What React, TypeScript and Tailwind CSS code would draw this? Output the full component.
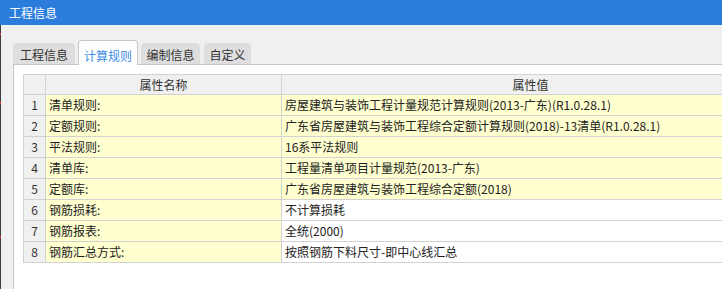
import React from "react";

const rows = [
  { name: "清单规则:", value: "房屋建筑与装饰工程计量规范计算规则(2013-广东)(R1.0.28.1)", hl: true },
  { name: "定额规则:", value: "广东省房屋建筑与装饰工程综合定额计算规则(2018)-13清单(R1.0.28.1)", hl: true },
  { name: "平法规则:", value: "16系平法规则", hl: true },
  { name: "清单库:", value: "工程量清单项目计量规范(2013-广东)", hl: true },
  { name: "定额库:", value: "广东省房屋建筑与装饰工程综合定额(2018)", hl: true },
  { name: "钢筋损耗:", value: "不计算损耗", hl: false },
  { name: "钢筋报表:", value: "全统(2000)", hl: false },
  { name: "钢筋汇总方式:", value: "按照钢筋下料尺寸-即中心线汇总", hl: false },
];

const tabs = [
  { label: "工程信息", w: "w-[62px]" },
  { label: "计算规则", w: "w-[60px]", active: true },
  { label: "编制信息", w: "w-[59px]" },
  { label: "自定义", w: "w-[47px]" },
];

const Tab = ({ label, w, active }: { label: string; w: string; active?: boolean }) =>
  active ? (
    <div
      className={`${w} h-[25px] -mb-px relative z-10 flex items-end justify-center pb-[3px] bg-white border border-b-0 border-[#c6c6c6] rounded-t-[4px] text-[#3a8be6]`}
    >
      {label}
    </div>
  ) : (
    <div className={`${w} h-[21px] flex items-end justify-center pb-[3px] bg-[#dedede] rounded-t-[4px] text-[#333]`}>
      {label}
    </div>
  );

export default function App() {
  return (
    <div className="w-[722px] h-[289px] overflow-hidden bg-[#f0f0f0] text-[12px] leading-none font-['Noto_Sans_CJK_SC','Noto_Sans',sans-serif]">
      <div className="h-[25px] bg-[#2b7ddc] text-white flex items-center pl-[9px]">工程信息</div>

      <div className="relative h-[264px] border-l border-[#3c3c3c] pl-[12px] pt-[15px] flex flex-col">
        <span className="absolute left-[-1px] top-[8px] w-px h-[2px] bg-[#e33]" />
        <span className="absolute left-[-1px] top-[77px] w-px h-[2px] bg-[#e33]" />
        <span className="absolute left-[-1px] top-[211px] w-px h-[2px] bg-[#e33]" />

        <div className="flex items-end h-[24px] gap-[3px]">
          {tabs.map((t, i) => (
            <div key={t.label} className={i === 3 ? "ml-px" : ""}>
              <Tab {...t} />
            </div>
          ))}
        </div>

        <div className="flex-1 bg-white border-t border-l border-[#c6c6c6] pl-[9px] pt-[9px]">
          <div className="w-[760px] border-t border-l border-[#d2d2d2] text-[#222]">
            <div className="flex h-[20px] bg-[#f0f0f0] text-[#333]">
              <div className="w-[22px] border-r border-b border-[#d2d2d2]" />
              <div className="w-[236px] border-r border-b border-[#d2d2d2] flex items-center justify-center">属性名称</div>
              <div className="w-[498px] border-r border-b border-[#d2d2d2] flex items-center justify-center">属性值</div>
            </div>
            {rows.map((r, i) => (
              <div key={r.name} className="flex h-[21px]">
                <div className="w-[22px] bg-[#f0f0f0] border-r border-b border-[#d2d2d2] flex items-center justify-center text-[#333]">
                  {i + 1}
                </div>
                <div className="w-[236px] bg-[#ffffd0] border-r border-b border-[#d2d2d2] flex items-center pl-[3px]">
                  {r.name}
                </div>
                <div
                  className={`w-[498px] border-r border-b border-[#d2d2d2] flex items-center pl-[3px] whitespace-nowrap ${
                    r.hl ? "bg-[#ffffd0]" : "bg-white"
                  }`}
                >
                  {r.value}
                </div>
              </div>
            ))}
          </div>
        </div>
      </div>
    </div>
  );
}
